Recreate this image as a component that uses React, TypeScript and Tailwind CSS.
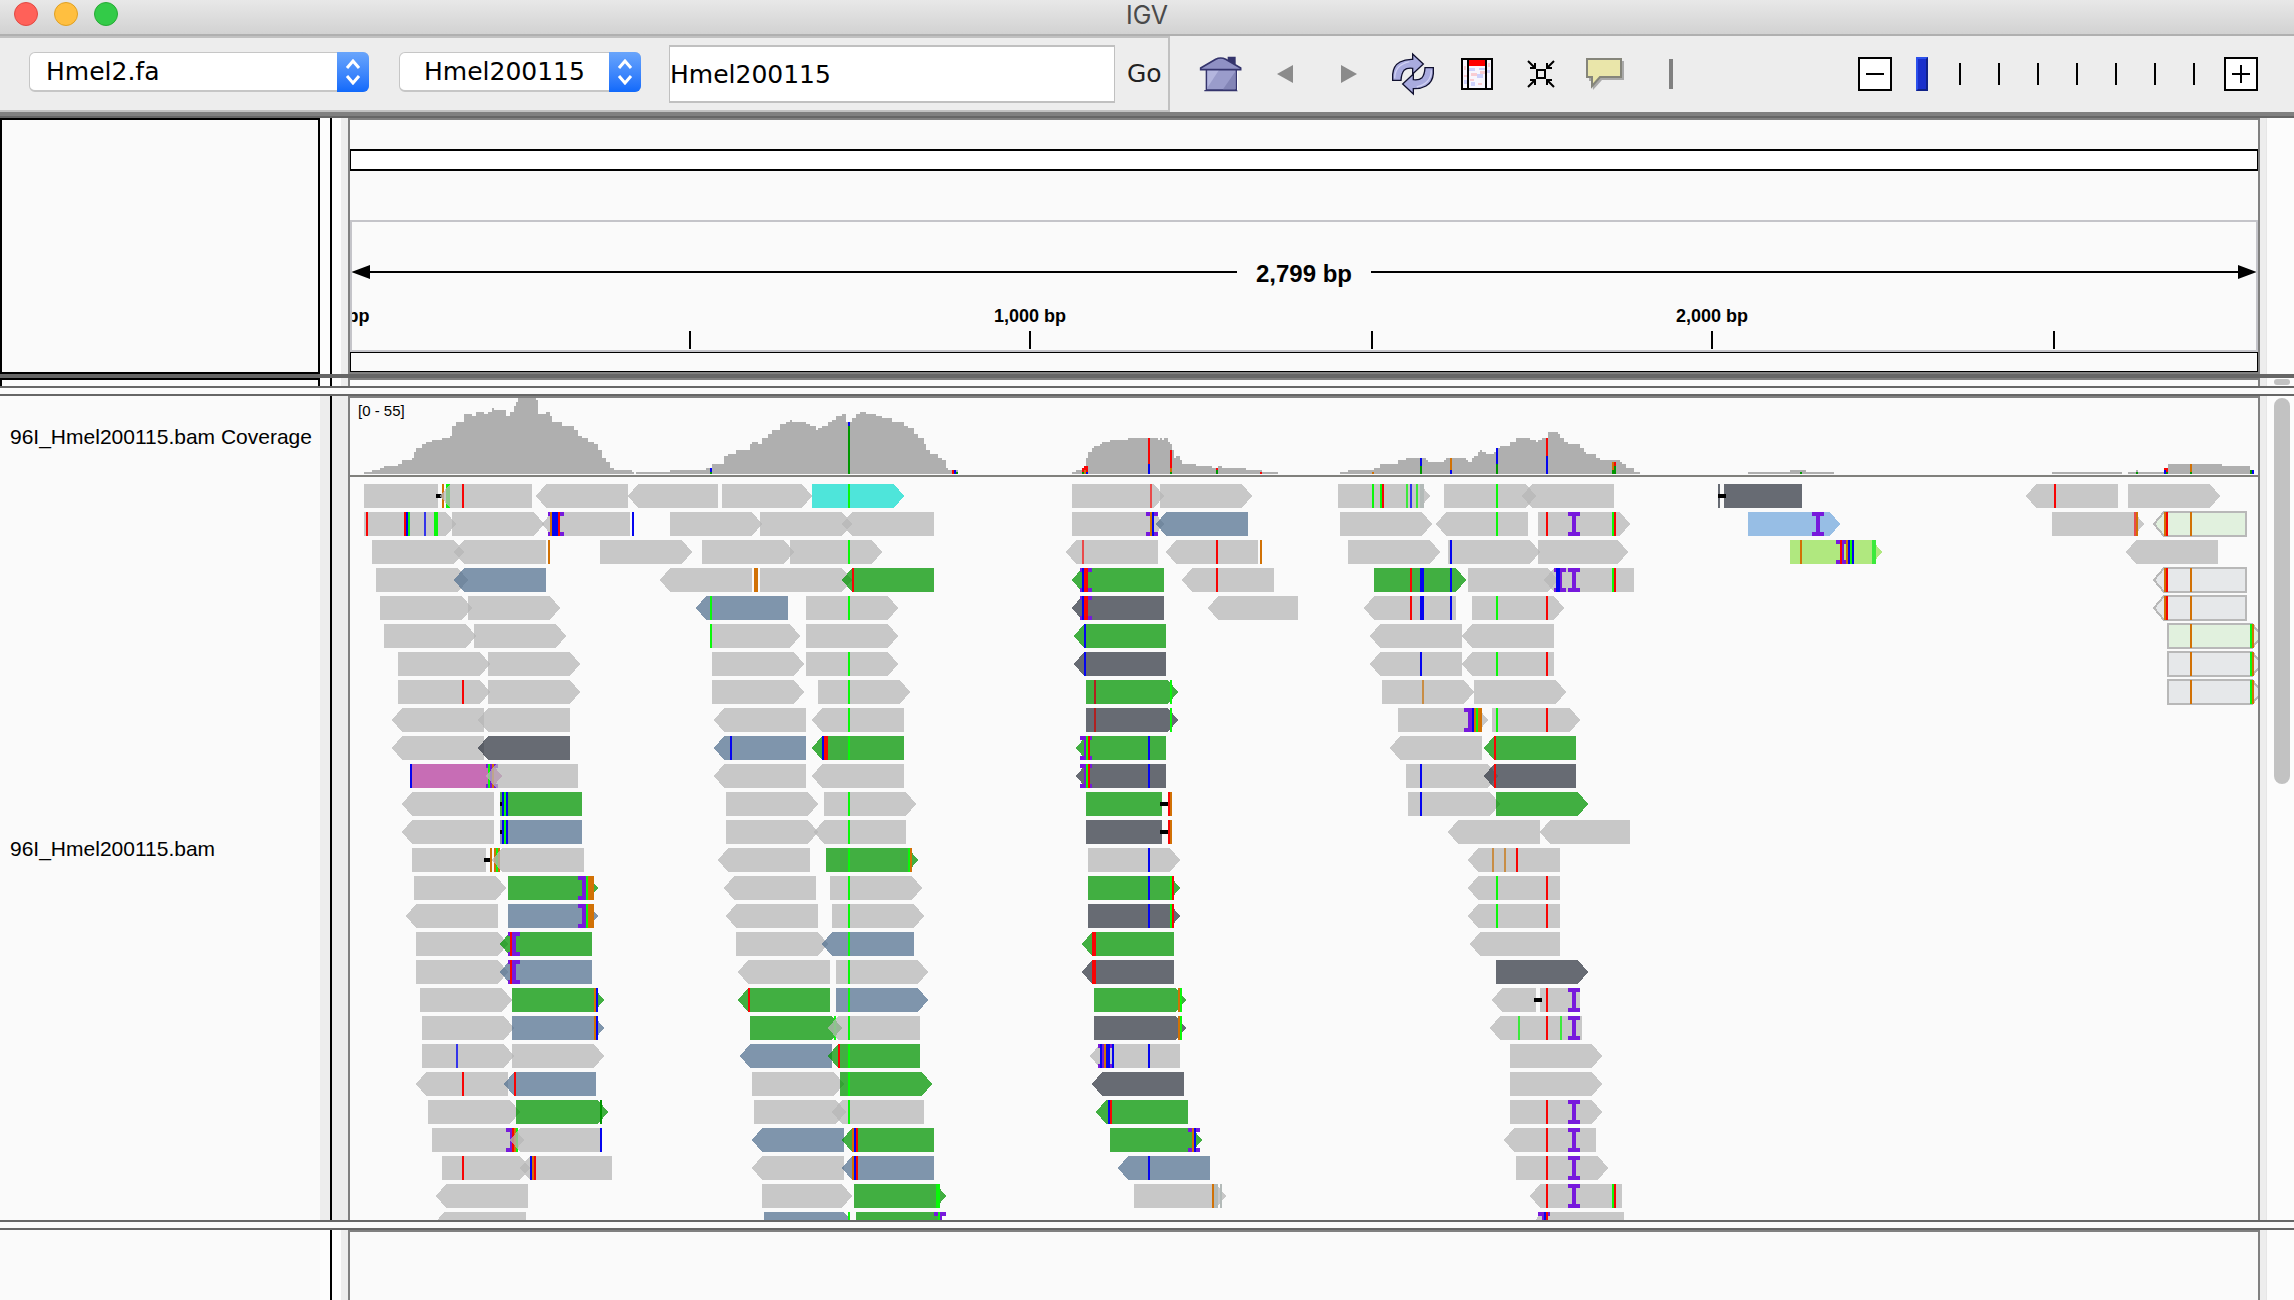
import React from 'react';

/* ------------------------------------------------------------------ */
/* Alignment data                                                      */
/*                                                                     */
/* Every row of a cluster is a list of tokens, painted in order:       */
/*   L10-90n  read pointing left from 10 to 90, paint "n"              */
/*   R / S    read pointing right / read without a tip                 */
/*   OL / OR  outlined read (mapping quality zero)                     */
/*   r40x4    mismatch stripe at 40, four pixels wide (default two)    */
/*   I40      insertion marker, d40x6 deletion dash                    */
/* ------------------------------------------------------------------ */

type Cluster = {
  origin: number;
  step: number;
  coverage: string[];
  coverageMarks: string;
  rows: string[];
};

const PAINT: Record<string, string> = {
  '': '#b7b7b7',
  n: '#039503',
  s: '#567392',
  k: '#353b45',
  c: '#14decf',
  m: '#b53d9e',
  a: '#76a9dd',
  y: '#97e256',
};

const OUTLINE_PAINT: Record<string, string> = { '': '#e6e8ea', n: '#e1f1de' };

const STRIPE: Record<string, string> = {
  r: '#f80404',
  g: '#0af80a',
  b: '#0404f0',
  o: '#d17105',
  p: '#e94b4b',
  B: '#3333ea',
  h: '#3bea3b',
  t: '#009600',
  q: '#b02020',
  w: '#c88d45',
  v: '#b3bab8',
};

const CLUSTERS: Cluster[] = [
  {
    origin: 340,
    step: 620 / 1568,
    coverage: [
      '61,246 81,240 100,234 111,228 147,222 157,210 180,204 185,186 192,174 207,162 217,156 232,150 260,144 278,138 283,108 293,96 313,72 334,78 344,66 364,72 374,66 385,54 390,60 420,78 430,66 440,48 445,36 450,24 496,30 500,72 520,66 530,78 536,96 560,108 592,120 602,138 612,144 627,156 642,162 652,180 662,204 672,216 682,234 693,240 738,246 744,252',
      '749,246 835,240 926,234 941,222 971,198 981,192 1001,180 1036,162 1042,156 1057,162 1067,144 1082,132 1092,120 1112,102 1128,96 1138,90 1143,96 1178,102 1188,108 1204,120 1209,114 1219,108 1234,96 1244,90 1255,78 1270,72 1280,96 1295,84 1305,72 1315,66 1330,72 1356,78 1371,84 1396,96 1427,108 1437,114 1452,132 1462,144 1477,162 1480,180 1490,192 1510,204 1522,210 1532,234 1540,240 1563,252',
    ],
    coverageMarks:
      'b936:234-246 t936:246-252 b1285:96-108 t1285:108-252 r1548:240-252 b1553:240-252 t1558:246-252',
    rows: [
      'S61-248 d243x6 o258 g268x4 L254-486 r309 L497-728 L726-956 R966-1196 R1194-1426c g1285',
      'R61-293 r66 r162 b167 g172 B212 g238x4 R283-517 L512-733 I526 I536 o531 b536x6 r551 b738 R835-1067 R1062-1294 L1270-1502',
      'R81-313 L289-521 o526 R658-890 R916-1147 R1138-1371 g1285',
      'R91-323 L289-521s L810-1042 o1047x4 R1062-1294 L1270-1502n r1295',
      'R101-333 R324-556 L901-1133s g936 R1179-1411 g1285',
      'R111-343 R339-571 R941-1163 g936 R1179-1411',
      'R147-379 R374-606 R941-1173 R1179-1411 g1285',
      'R147-379 r309 R374-606 R941-1173 R1209-1442 g1285',
      'L132-364 L349-582 L947-1179 L1194-1426 g1285',
      'L132-364 L349-582k L947-1179s b986 L1194-1426n b1219 r1224x4 g1285',
      'R177-410m b177 I369 g374 o384 L369-602 L947-1179 L1194-1426',
      'L157-389 S405-612n d405x2 b410 g415 b420 R976-1209 R1224-1457 g1285',
      'L157-389 S405-612s d405x2 b410 g415 b420 R976-1209 L1199-1431 g1285',
      'S182-369 d364x6 o379 o389 g394x4 o402 L384-617 L957-1189 R1229-1462n g1285 g1436 o1441',
      'R187-420 R425-652n I602 g622 o627x6 L972-1204 R1239-1472 g1285',
      'L167-400 R425-652s I602 g622 o627x6 L977-1209 R1244-1477 g1285',
      'R192-424 L405-637n I425 r430 R1001-1233 L1219-1452s g1285',
      'R192-424 L405-637s I425 r430 L1007-1239 R1254-1487 g1285',
      'R202-434 R435-668n o642 b647 L1007-1239n r1032 R1254-1487s g1285',
      'R207-439 R435-668s o642 b647 R1037-1270n g1249 L1234-1467 g1285',
      'R207-439 B293 R435-668 L1012-1244s L1234-1467n r1259 g1285',
      'L193-425 r309 L415-647s r440 R1042-1275 R1265-1497n g1285',
      'R223-455 R445-678n t658 R1047-1280 L1244-1477 g1285',
      'R233-465 I420 r435 o440 g445 L430-658 b658 L1042-1275s L1270-1502n o1295 b1300 r1305',
      'R258-480 r309 L455-688 b480 o485 r490 L1042-1275 L1270-1502s o1295 b1300 r1305',
      'L244-475 R1067-1295 R1300-1533n g1507x4',
      'L239-470 R1072-1300s g1285 R1305-1533n I1502 g1512',
    ],
  },
  {
    origin: 1040,
    step: 620 / 1568,
    coverage: [
      '81,246 91,240 106,234 116,204 121,186 131,174 137,168 152,162 157,156 177,150 223,144 298,150 303,144 308,150 314,144 324,156 330,162 334,180 339,204 344,198 355,210 360,222 395,228 435,234 449,228 460,234 520,240 560,246 602,252',
      '759,246 779,240 845,234 860,222 905,210 926,204 976,210 981,216 1022,210 1027,204 1077,210 1082,216 1093,204 1098,198 1108,186 1113,180 1118,186 1128,192 1148,186 1153,174 1163,168 1188,156 1204,144 1239,150 1255,156 1260,150 1270,144 1285,126 1310,132 1315,144 1325,156 1335,162 1366,174 1375,186 1381,192 1406,204 1417,210 1467,216 1472,222 1482,234 1502,246 1517,252',
    ],
    coverageMarks:
      'r106:234-246 t106:246-252 o111:240-252 r111:228-240 r116:228-246 b116:246-252 r273:144-222 b273:222-252 r329:180-234 o329:234-246 t329:246-252 r445:234-240 t445:240-252 r556:246-252 o840:246-252 b961:204-228 t961:228-252 o1037:204-240 b1037:240-252 b1153:174-222 t1153:222-252 r1280:144-198 b1280:198-252 o1447:216-240 t1447:240-252 r1452:216-228 t1452:228-252',
    rows: [
      'R81-313 p278 R303-536 R754-986 g840 g860 r865 h926 B936 h951 v961x4 R1022-1254 g1153 L1220-1452',
      'R81-313 I268 o278 b283 L293-526s R759-991 L1002-1234 g1153 R1259-1492 r1280 I1335 g1447 r1452',
      'L66-298 p106 L319-551 r445 o556 R779-1012 R1032-1264 b1037 R1259-1487',
      'L81-314n I101 b106 r113x4 L359-592 r445 R845-1077n r936 b961x4 b1037 R1082-1310 L1274-1502 I1300 b1305x4 I1335 g1447 r1452',
      'L81-314k I101 b106 r113x4 L425-652 L820-1052 r936 b961x4 b1037 R1093-1325 g1153 r1280',
      'L87-319n b111 L835-1067 L1068-1300',
      'L87-319k b111 L835-1067 b961 L1068-1300 g1153 r1280',
      'R116-349n q137 g329 R865-1098 w966 R1098-1330',
      'R116-349k q137 g329 R905-1133 I1072 b1093 o1098 g1103 o1108x4 R1143-1366 g1153 r1280',
      'L92-319n I101 g116 r121 b273 L886-1118 L1123-1356n r1148',
      'L92-319k I101 g116 r121 b273 R926-1158 b961 L1123-1356k r1148',
      'S116-309n d303x8 r324 o329 R931-1163 b961 R1153-1386n',
      'S116-309k d303x8 r324 o329 L1032-1265 L1263-1492',
      'R121-354 b273 L1083-1315 w1143 w1173 r1204',
      'R121-354n b273 g329 r334 L1083-1315 g1153 r1280',
      'R121-354k b273 g329 r334 L1083-1315 g1153 r1280',
      'L107-339n r132x4 L1088-1315',
      'L107-339k r132x4 R1153-1386k',
      'R137-369n o349 g354 L1144-1254 S1265-1366 d1249x8 r1280 I1335',
      'R137-369k o349 g354 L1139-1371 h1209 r1280 h1315 I1335',
      'L127-354 I147 I157 b152 o162 b167x4 b182 b273 R1189-1421',
      'L132-364k R1189-1421',
      'L142-374n b172 r177 R1189-1421 r1280 I1335',
      'R177-410n I374 o384 b389 L1174-1406 r1280 I1335',
      'L198-430s b273 R1204-1436 r1280 I1335',
      'R238-470 o435 v440x4 v455 L1240-1472 r1280 I1335 g1447 r1452',
      'L1245-1477 I1259 b1275 r1280',
    ],
  },
  {
    origin: 1640,
    step: 654 / 1568,
    coverage: [
      '259,246 360,240 398,246 465,252',
      '988,246 1156,252',
      '1170,246 1189,240 1194,246 1256,240 1266,222 1395,228 1463,240 1472,252',
    ],
    coverageMarks:
      't384:246-252 t1189:246-252 b1256:240-252 r1256:234-240 r1261:234-246 t1261:246-252 o1319:222-246 t1319:246-252 t1463:240-252 b1467:240-252',
    rows: [
      'S187-192k S201-388k d187x8 L926-1146 r993 R1170-1391',
      'R259-480a I412 R988-1208 p1184 o1189 OL1231-1453n o1256 r1261 o1319',
      'R360-580y o384 I470 r480 o494 b499 g504 b509 h556x4 L1166-1386',
      'OL1231-1453 o1256 r1261 o1319',
      'OL1231-1453 o1256 r1261 o1319',
      'OR1265-1490n o1319 g1463 o1467',
      'OR1265-1490 o1319 g1463 o1467',
      'OR1265-1490 o1319 g1463 o1467',
    ],
  },
];

const ROW_TOP = 484;
const ROW_PITCH = 28;
const READ_HEIGHT = 24;
const TIP = 10;

const snap = (c: Cluster, v: number) => 2 * Math.round((c.origin + v * c.step) / 2);

function readPoints(dir: string, x1: number, x2: number, y: number, h: number) {
  const mid = y + h / 2;
  if (dir === 'L')
    return `${x1},${mid} ${x1 + TIP},${y} ${x2},${y} ${x2},${y + h} ${x1 + TIP},${y + h}`;
  if (dir === 'R')
    return `${x1},${y} ${x2 - TIP},${y} ${x2},${mid} ${x2 - TIP},${y + h} ${x1},${y + h}`;
  return `${x1},${y} ${x2},${y} ${x2},${y + h} ${x1},${y + h}`;
}

function Token({ cluster, token, y }: { cluster: Cluster; token: string; y: number }) {
  const read = token.match(/^(O?)([LRS])(\d+)-(\d+)([a-z]?)$/);
  if (read) {
    const [, outlined, dir, a, b, paint] = read;
    const x1 = snap(cluster, +a);
    const x2 = snap(cluster, +b);
    return outlined ? (
      <polygon
        points={readPoints(dir, x1, x2, y, READ_HEIGHT)}
        fill={OUTLINE_PAINT[paint]}
        stroke="#b8b8b8"
        strokeWidth={2}
      />
    ) : (
      <polygon points={readPoints(dir, x1, x2, y, READ_HEIGHT)} fill={PAINT[paint]} fillOpacity={0.75} />
    );
  }
  const mark = token.match(/^([A-Za-z])(\d+)(?:x(\d+))?$/);
  if (!mark) return null;
  const x = snap(cluster, +mark[2]);
  const w = mark[3] ? +mark[3] : 2;
  if (mark[1] === 'I')
    return (
      <path
        d={`M${x} ${y}h12v4h-4v16h4v4h-12v-4h4v-16h-4z`}
        fill="#7719dc"
      />
    );
  if (mark[1] === 'd') return <rect x={x} y={y + 10} width={w} height={4} fill="#000" />;
  return <rect x={x} y={y} width={w} height={READ_HEIGHT} fill={STRIPE[mark[1]]} />;
}

function coveragePath(cluster: Cluster, profile: string) {
  const pts = profile.split(' ').map((p) => p.split(',').map(Number));
  let d = `M${snap(cluster, pts[0][0])} 474`;
  pts.forEach(([x, y]) => {
    d += `H${snap(cluster, x)}V${390 + y / 3}`;
  });
  return d + 'Z';
}

function TracksDrawing() {
  return (
    <svg
      viewBox="350 398 1908 822"
      className="block h-auto w-full"
      shapeRendering="crispEdges"
      role="img"
      aria-label="Coverage and alignments"
    >
      {CLUSTERS.map((c) => (
        <g key={c.origin}>
          {c.coverage.map((p) => (
            <path key={p} d={coveragePath(c, p)} fill="#afafaf" />
          ))}
          {c.coverageMarks.split(' ').map((m, i) => {
            const [, k, x, a, b] = m.match(/^(\w)(\d+):(\d+)-(\d+)$/)!;
            return (
              <rect
                key={i}
                x={snap(c, +x)}
                y={390 + +a / 3}
                width={2}
                height={(+b - +a) / 3}
                fill={STRIPE[k]}
              />
            );
          })}
        </g>
      ))}
      <rect x={350} y={475} width={1908} height={2} fill="#80807c" />
      <text x={358} y={416} fontFamily="Liberation Sans, sans-serif" fontSize={15} fill="#000">
        [0 - 55]
      </text>
      {CLUSTERS.map((c) => (
        <g key={c.origin}>
          {c.rows.map((row, r) =>
            row
              .split(' ')
              .map((t, i) => <Token key={`${r}-${i}`} cluster={c} token={t} y={ROW_TOP + r * ROW_PITCH} />),
          )}
        </g>
      ))}
    </svg>
  );
}

function RulerDrawing() {
  return (
    <svg
      viewBox="352 222 1904 128"
      className="block h-auto w-full"
      role="img"
      aria-label="Ruler, 2,799 bp"
      fontFamily="Liberation Sans, sans-serif"
      fontWeight={700}
      textAnchor="middle"
    >
      <path d="M351 272l19-7v14zM2257 272l-19-7v14z" />
      <path d="M368 271h869v2h-869zM1371 271h869v2h-869z" />
      <text x={1304} y={282} fontSize={24}>
        2,799 bp
      </text>
      <text x={351} y={322} fontSize={18}>
        0 bp
      </text>
      <text x={1030} y={322} fontSize={18}>
        1,000 bp
      </text>
      <text x={1712} y={322} fontSize={18}>
        2,000 bp
      </text>
      {[689, 1029, 1371, 1711, 2053].map((x) => (
        <rect key={x} x={x} y={331} width={2} height={18} />
      ))}
    </svg>
  );
}

/* ------------------------------------------------------------------ */
/* Toolbar icons                                                       */
/* ------------------------------------------------------------------ */

const HomeIcon = () => (
  <svg width="44" height="36" viewBox="28 46 132 108">
    <path d="M114 48h24v24l-24-12z" fill="#34346c" />
    <path d="M50 86h90v62H50z" fill="#9a9ccb" stroke="#34346c" strokeWidth="4" />
    <path d="M54 88h34L54 140z" fill="#b4b6de" />
    <path d="M100 146l36-52v52z" fill="#8385b6" />
    <path d="M33 82L78 56q15-8 30 0l45 26v5H33z" fill="#8f91c4" stroke="#34346c" strokeWidth="5" />
    <path d="M44 150h100" stroke="#34346c" strokeWidth="4" />
    <path d="M144 92v58" stroke="#fff" strokeWidth="3" />
  </svg>
);

const BackIcon = () => (
  <svg width="18" height="18" viewBox="0 0 18 18">
    <path d="M1 9L17 0v18z" fill="#8b8b8b" />
  </svg>
);

const ForwardIcon = () => (
  <svg width="18" height="18" viewBox="0 0 18 18">
    <path d="M17 9L1 0v18z" fill="#8b8b8b" />
  </svg>
);

const RefreshIcon = () => (
  <svg width="44" height="44" viewBox="603 33 132 132">
    {[0, 180].map((a) => (
      <path
        key={a}
        transform={`rotate(${a} 669 99)`}
        d="M608 118V100Q610 74 630 63Q646 54 668 55V39L700 69L668 99V82Q650 80 642 88Q634 98 633 118Z"
        fill="#a9abdf"
        stroke="#111130"
        strokeWidth="4"
      />
    ))}
    <path d="M614 112q0-40 44-50M724 88q0 40-44 50" fill="none" stroke="#cfd0f2" strokeWidth="4" />
  </svg>
);

const RegionIcon = () => (
  <svg width="32" height="32" viewBox="0 0 32 32" shapeRendering="crispEdges">
    <path d="M0 0h32v32H0z" fill="#000" />
    <path d="M2 2h4v28H2zM8 2h16v28H8zM26 2h4v28h-4z" fill="#f7f5fd" />
    <path d="M8 2h16v6H8z" fill="#f00" />
    <path d="M8 10h6v3H8zM16 16h6v4h-6zM10 24h4v4h-4zM26 12h3v3h-3zM18 10h6v2h-6zM3 22h3v4H3z" fill="#cdd0fb" />
    <path d="M10 15h6v3h-6zM19 13h5v3h-5zM3 8h2v4H3zM27 5h2v4h-2zM17 25h4v2h-4zM3 17h3v2H3zM9 21h4v2H9z" fill="#f9ccd2" />
  </svg>
);

const FitIcon = () => (
  <svg width="28" height="28" viewBox="0 0 28 28" fill="none" stroke="#000" strokeWidth="2">
    <path d="M10 10h8v8h-8z" />
    <path d="M1 1l7 7M27 1l-7 7M1 27l7-7M27 27l-7-7" />
    <path d="M8 3v5H3M20 3v5h5M8 25v-5H3M20 25v-5h5" />
  </svg>
);

const BubbleIcon = () => (
  <svg width="40" height="34" viewBox="0 0 40 34">
    <path d="M4 4h35v19H17L8 33l-1-9H4z" fill="#a9a9a9" />
    <path d="M2 2h34v18H15l-8 9v-9H2z" fill="#eae6aa" stroke="#85857a" strokeWidth="2" />
  </svg>
);

function ToolButton({ label, children }: { label: string; children: React.ReactNode }) {
  return (
    <button type="button" aria-label={label} className="flex h-11 w-12 items-center justify-center">
      {children}
    </button>
  );
}

function Stepper() {
  return (
    <span className="pointer-events-none absolute inset-y-0 right-0 flex w-8 items-center justify-center rounded-r-md bg-linear-to-b from-[#69a5fb] to-[#0f69fb]">
      <svg width="16" height="26" viewBox="0 0 16 26" fill="none" stroke="#fff" strokeWidth="3">
        <path d="M2 9l6-7 6 7M2 17l6 7 6-7" />
      </svg>
    </span>
  );
}

function Picker({ label, value, className, pad }: { label: string; value: string; className: string; pad: string }) {
  return (
    <label className={`relative block h-10 shrink-0 ${className}`}>
      <span className="sr-only">{label}</span>
      <select
        defaultValue={value}
        className={`h-full w-full appearance-none rounded-md border border-b-2 border-[#c6c6c6] bg-white pr-8 text-[25px] leading-[36px] text-black ${pad}`}
      >
        <option>{value}</option>
      </select>
      <Stepper />
    </label>
  );
}

function Toolbar() {
  return (
    <div className="flex h-[76px] items-stretch bg-[#ededed]">
      <div className="flex w-[1170px] shrink-0 items-center border-2 border-l-0 border-[#c1c1c1] pl-[29px]">
        <Picker label="Genome" value="Hmel2.fa" className="mb-1 w-[340px]" pad="pl-4" />
        <Picker label="Chromosome" value="Hmel200115" className="mb-1 ml-[30px] w-[242px]" pad="pl-6" />
        <input
          type="text"
          aria-label="Locus"
          defaultValue="Hmel200115"
          className="ml-7 h-[58px] w-[446px] border border-y-2 border-[#c0c0c0] bg-white text-[25px] text-black"
        />
        <button type="button" className="ml-3 text-[25px] text-[#222]">
          Go
        </button>
      </div>
      <div className="flex flex-1 items-center gap-4 pl-[27px]">
        <ToolButton label="Home">
          <HomeIcon />
        </ToolButton>
        <ToolButton label="Back">
          <BackIcon />
        </ToolButton>
        <ToolButton label="Forward">
          <ForwardIcon />
        </ToolButton>
        <ToolButton label="Refresh">
          <RefreshIcon />
        </ToolButton>
        <ToolButton label="Define a region">
          <RegionIcon />
        </ToolButton>
        <ToolButton label="Fit to window">
          <FitIcon />
        </ToolButton>
        <ToolButton label="Popup text">
          <BubbleIcon />
        </ToolButton>
        <span className="ml-6 h-[30px] w-1 bg-[#808080]" />
      </div>
      <div className="flex shrink-0 items-center pr-9">
        <button
          type="button"
          aria-label="Zoom out"
          className="flex h-[34px] w-[34px] items-center justify-center border-2 border-black bg-white"
        >
          <span className="h-[2px] w-[18px] bg-black" />
        </button>
        <div className="relative ml-6 h-[34px] w-[308px]">
          <div className="flex h-full items-center justify-between pr-[29px] pl-[43px]">
            {[0, 1, 2, 3, 4, 5, 6].map((t) => (
              <span key={t} className="h-[22px] w-[2px] bg-black" />
            ))}
          </div>
          <input
            type="range"
            aria-label="Zoom"
            min={0}
            max={7}
            defaultValue={0}
            className="absolute inset-y-0 left-0 h-full w-[284px] appearance-none bg-transparent [&::-webkit-slider-thumb]:h-[34px] [&::-webkit-slider-thumb]:w-3 [&::-webkit-slider-thumb]:appearance-none [&::-webkit-slider-thumb]:border-2 [&::-webkit-slider-thumb]:border-t-[#2b50ec] [&::-webkit-slider-thumb]:border-r-[#112288] [&::-webkit-slider-thumb]:border-b-[#112288] [&::-webkit-slider-thumb]:border-l-[#2b50ec] [&::-webkit-slider-thumb]:bg-[#1a30cc]"
          />
        </div>
        <button
          type="button"
          aria-label="Zoom in"
          className="flex h-[34px] w-[34px] items-center justify-center border-2 border-black bg-white"
        >
          <svg width="18" height="18" viewBox="0 0 18 18" shapeRendering="crispEdges">
            <path d="M8 0h2v8h8v2h-8v8H8v-8H0V8h8z" />
          </svg>
        </button>
      </div>
    </div>
  );
}

/* One horizontal band: track names, divider, data, scroll gutter. */
function Band({
  names,
  gutter,
  scroll,
  className,
  children,
}: {
  names?: React.ReactNode;
  gutter: string;
  scroll?: React.ReactNode;
  className?: string;
  children?: React.ReactNode;
}) {
  return (
    <section className={`flex overflow-hidden bg-[#fafafa] ${className ?? ''}`}>
      <div className="flex w-80 shrink-0 flex-col">{names}</div>
      <div className={`flex w-7 shrink-0 ${gutter}`}>
        <div className="w-[10px]" />
        <div className="w-[2px] bg-black" />
        <div className="w-[9px]" />
        <div className="flex-1 bg-[#ededed]" />
      </div>
      <div className="min-w-0 flex-1 border-x-2 border-t-2 border-[#808080]">{children}</div>
      <div className="flex w-[34px] shrink-0 bg-[#fcfcfc]">
        <div className="w-[7px] border-r border-[#e6e6e6] bg-[#ededed]" />
        <div className="flex flex-1 flex-col items-center pl-[2px]">{scroll}</div>
      </div>
    </section>
  );
}

const Splitter = () => <div className="h-[10px] shrink-0 border-y-2 border-[#666] bg-[#fafafa]" />;

export default function App() {
  return (
    <div className="flex min-h-screen flex-col bg-[#fafafa] font-['DejaVu_Sans',sans-serif]">
      <header className="relative flex h-9 shrink-0 items-start justify-center border-b-2 border-[#b0b0b0] bg-linear-to-b from-[#e8e8e8] to-[#d2d2d2]">
        <div className="absolute top-[2px] left-[14px] flex gap-4">
          <button type="button" aria-label="Close" className="h-6 w-6 rounded-full border border-[#e14942] bg-[#ff6159]" />
          <button type="button" aria-label="Minimize" className="h-6 w-6 rounded-full border border-[#dfa023] bg-[#ffbf40]" />
          <button type="button" aria-label="Zoom window" className="h-6 w-6 rounded-full border border-[#27aa35] bg-[#33cb48]" />
        </div>
        <h1 className="font-['Inter',sans-serif] text-[25px] leading-[30px] text-[#4a4a4a]">IGV</h1>
      </header>
      <Toolbar />
      <div className="h-[6px] shrink-0 border-b-2 border-[#666] bg-[#808080]" />

      <Band
        gutter="bg-[#fdfdfd]"
        names={<div className="flex-1 border-2 border-black" />}
      >
        <div className="mt-[29px] h-[22px] border-x border-y-2 border-black bg-white" />
        <div className="mt-[49px] border-2 border-[#c4c4c9]">
          <RulerDrawing />
        </div>
        <div className="h-5 border border-black" />
        <div className="h-[2px] bg-[#808080]" />
      </Band>
      <div className="h-1 shrink-0 bg-[#666]" />
      <Band
        className="h-2 shrink-0"
        gutter="bg-[#fdfdfd]"
        names={<div className="flex-1 border-2 border-b-0 border-black" />}
        scroll={<div className="mt-px h-[6px] w-4 rounded-full bg-[#c2c2c2]" />}
      />
      <Splitter />
      <Band
        gutter="bg-[#ededed]"
        names={
          <div className="flex flex-1 flex-col bg-[#fafafa] pl-[10px] font-['Liberation_Sans',sans-serif] text-[21px] leading-6 text-black">
            <div className="mt-[29px]">96I_Hmel200115.bam Coverage</div>
            <div className="mt-[388px]">96I_Hmel200115.bam</div>
          </div>
        }
        scroll={<div className="mt-[2px] h-[386px] w-4 rounded-full bg-[#c2c2c2]" />}
      >
        <TracksDrawing />
      </Band>
      <Splitter />
      <Band className="flex-1" gutter="bg-[#fdfdfd]" />
    </div>
  );
}
